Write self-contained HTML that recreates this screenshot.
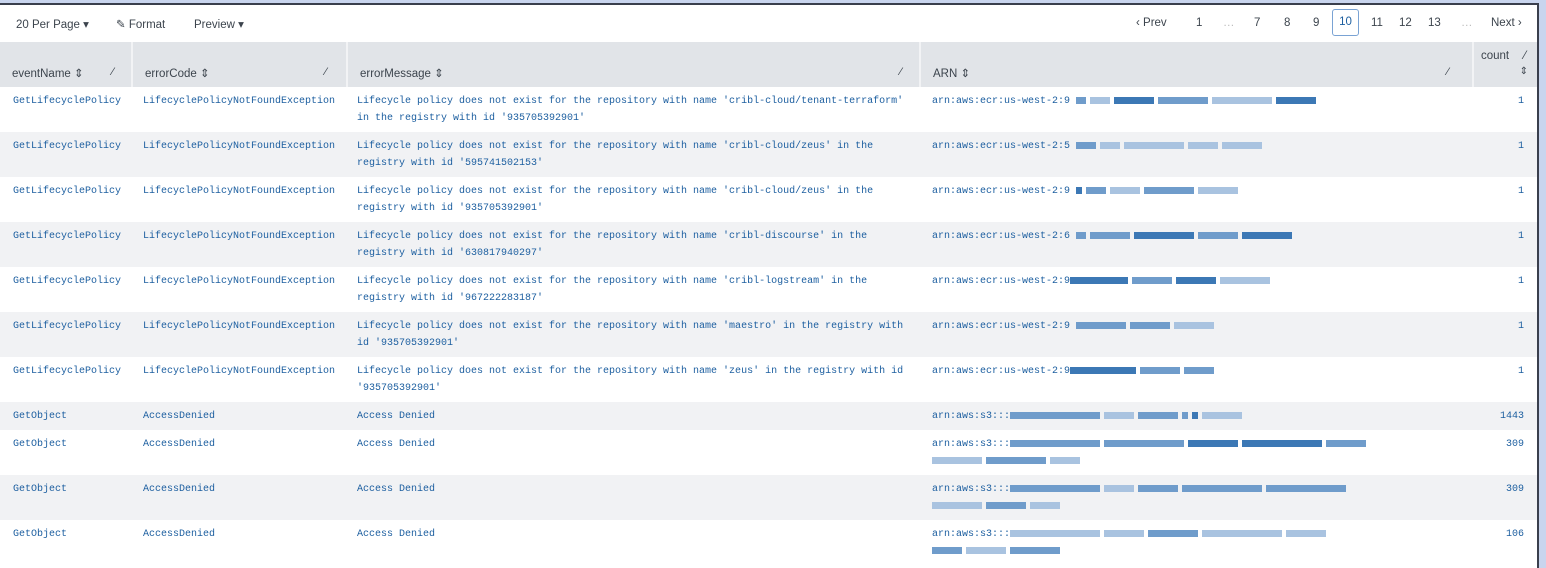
<!DOCTYPE html><html><head><meta charset="utf-8"><style>
*{box-sizing:border-box;margin:0;padding:0}
body{width:1546px;height:568px;background:#c9d5ee;position:relative;overflow:hidden;font-family:"Liberation Sans",sans-serif}
.frame{position:absolute;left:0;top:3px;width:1539px;height:565px;background:#fff;border-top:2px solid #3a3f4d;border-right:2px solid #3a3f4d}
.tb{position:absolute;top:12px;font-size:11.5px;color:#3c444d}
.hdr{position:absolute;left:0;top:37px;width:1537px;height:45px;background:#e1e4e8}
.hc{position:absolute;top:0;height:45px;border-right:2px solid #f2f3f5;font-size:11.5px;color:#3c444d}
.hc span.t{position:absolute;left:12px;top:24px}
.pen{position:absolute;top:24px;font-size:11px;color:#3c444d}
.row{position:absolute;left:0;width:1537px;font-family:"Liberation Mono",monospace;font-size:10px;color:#1d5fa0;line-height:17px}
.g{background:#f1f2f4}
.c{position:absolute;top:6px}
.b{display:inline-block;height:7px;vertical-align:middle;background:#3c78b5;margin-right:4px}
.l{background:#a9c3e0}.m{background:#6f9ccb}
.pg{position:absolute;top:12px;font-size:11.5px;color:#3c444d}
</style></head><body>
<div class="frame">
<div class="tb" style="left:16px">20 Per Page ▾</div>
<div class="tb" style="left:116px">✎ Format</div>
<div class="tb" style="left:194px">Preview ▾</div>
<div class="pg" style="left:1136px">‹ Prev</div>
<div class="pg" style="left:1196px">1</div>
<div class="pg" style="left:1223px;color:#bbb">…</div>
<div class="pg" style="left:1254px">7</div>
<div class="pg" style="left:1284px">8</div>
<div class="pg" style="left:1313px">9</div>
<div style="position:absolute;left:1332px;top:4px;width:27px;height:27px;border:1px solid #7aa3d4;border-radius:3px;font-size:11.5px;color:#1d5fa0;text-align:center;line-height:25px">10</div>
<div class="pg" style="left:1371px">11</div>
<div class="pg" style="left:1399px">12</div>
<div class="pg" style="left:1428px">13</div>
<div class="pg" style="left:1461px;color:#bbb">…</div>
<div class="pg" style="left:1491px">Next ›</div>
<div class="hdr">
<div class="hc" style="left:0;width:133px"><span class="t">eventName ⇕</span><span class="pen" style="left:112px">⁄</span></div>
<div class="hc" style="left:133px;width:215px"><span class="t">errorCode ⇕</span><span class="pen" style="left:192px">⁄</span></div>
<div class="hc" style="left:348px;width:573px"><span class="t">errorMessage ⇕</span><span class="pen" style="left:552px">⁄</span></div>
<div class="hc" style="left:921px;width:553px"><span class="t">ARN ⇕</span><span class="pen" style="left:526px">⁄</span></div>
<div class="hc" style="left:1474px;width:63px;border:none"><span style="position:absolute;left:7px;top:8px">count</span><span style="position:absolute;left:50px;top:8px">⁄</span><span style="position:absolute;right:9px;top:24px;font-size:10px">⇕</span></div>
</div>
</div>
<div class="row" style="top:87px;height:45px"><div class="c" style="left:13px">GetLifecyclePolicy</div><div class="c" style="left:143px">LifecyclePolicyNotFoundException</div><div class="c" style="left:357px">Lifecycle policy does not exist for the repository with name 'cribl-cloud/tenant-terraform'<br>in the registry with id '935705392901'</div><div class="c" style="left:932px">arn:aws:ecr:us-west-2:9 <span class="b m" style="width:10px"></span><span class="b l" style="width:20px"></span><span class="b" style="width:40px"></span><span class="b m" style="width:50px"></span><span class="b l" style="width:60px"></span><span class="b" style="width:40px"></span></div><div class="c" style="right:13px">1</div></div>
<div class="row g" style="top:132px;height:45px"><div class="c" style="left:13px">GetLifecyclePolicy</div><div class="c" style="left:143px">LifecyclePolicyNotFoundException</div><div class="c" style="left:357px">Lifecycle policy does not exist for the repository with name 'cribl-cloud/zeus' in the<br>registry with id '595741502153'</div><div class="c" style="left:932px">arn:aws:ecr:us-west-2:5 <span class="b m" style="width:20px"></span><span class="b l" style="width:20px"></span><span class="b l" style="width:60px"></span><span class="b l" style="width:30px"></span><span class="b l" style="width:40px"></span></div><div class="c" style="right:13px">1</div></div>
<div class="row" style="top:177px;height:45px"><div class="c" style="left:13px">GetLifecyclePolicy</div><div class="c" style="left:143px">LifecyclePolicyNotFoundException</div><div class="c" style="left:357px">Lifecycle policy does not exist for the repository with name 'cribl-cloud/zeus' in the<br>registry with id '935705392901'</div><div class="c" style="left:932px">arn:aws:ecr:us-west-2:9 <span class="b" style="width:6px"></span><span class="b m" style="width:20px"></span><span class="b l" style="width:30px"></span><span class="b m" style="width:50px"></span><span class="b l" style="width:40px"></span></div><div class="c" style="right:13px">1</div></div>
<div class="row g" style="top:222px;height:45px"><div class="c" style="left:13px">GetLifecyclePolicy</div><div class="c" style="left:143px">LifecyclePolicyNotFoundException</div><div class="c" style="left:357px">Lifecycle policy does not exist for the repository with name 'cribl-discourse' in the<br>registry with id '630817940297'</div><div class="c" style="left:932px">arn:aws:ecr:us-west-2:6 <span class="b m" style="width:10px"></span><span class="b m" style="width:40px"></span><span class="b" style="width:60px"></span><span class="b m" style="width:40px"></span><span class="b" style="width:50px"></span></div><div class="c" style="right:13px">1</div></div>
<div class="row" style="top:267px;height:45px"><div class="c" style="left:13px">GetLifecyclePolicy</div><div class="c" style="left:143px">LifecyclePolicyNotFoundException</div><div class="c" style="left:357px">Lifecycle policy does not exist for the repository with name 'cribl-logstream' in the<br>registry with id '967222283187'</div><div class="c" style="left:932px">arn:aws:ecr:us-west-2:9<span class="b" style="width:58px"></span><span class="b m" style="width:40px"></span><span class="b" style="width:40px"></span><span class="b l" style="width:50px"></span></div><div class="c" style="right:13px">1</div></div>
<div class="row g" style="top:312px;height:45px"><div class="c" style="left:13px">GetLifecyclePolicy</div><div class="c" style="left:143px">LifecyclePolicyNotFoundException</div><div class="c" style="left:357px">Lifecycle policy does not exist for the repository with name 'maestro' in the registry with<br>id '935705392901'</div><div class="c" style="left:932px">arn:aws:ecr:us-west-2:9 <span class="b m" style="width:50px"></span><span class="b m" style="width:40px"></span><span class="b l" style="width:40px"></span></div><div class="c" style="right:13px">1</div></div>
<div class="row" style="top:357px;height:45px"><div class="c" style="left:13px">GetLifecyclePolicy</div><div class="c" style="left:143px">LifecyclePolicyNotFoundException</div><div class="c" style="left:357px">Lifecycle policy does not exist for the repository with name 'zeus' in the registry with id<br>'935705392901'</div><div class="c" style="left:932px">arn:aws:ecr:us-west-2:9<span class="b" style="width:66px"></span><span class="b m" style="width:40px"></span><span class="b m" style="width:30px"></span></div><div class="c" style="right:13px">1</div></div>
<div class="row g" style="top:402px;height:28px"><div class="c" style="left:13px">GetObject</div><div class="c" style="left:143px">AccessDenied</div><div class="c" style="left:357px">Access Denied</div><div class="c" style="left:932px">arn:aws:s3:::<span class="b m" style="width:90px"></span><span class="b l" style="width:30px"></span><span class="b m" style="width:40px"></span><span class="b m" style="width:6px"></span><span class="b" style="width:6px"></span><span class="b l" style="width:40px"></span></div><div class="c" style="right:13px">1443</div></div>
<div class="row" style="top:430px;height:45px"><div class="c" style="left:13px">GetObject</div><div class="c" style="left:143px">AccessDenied</div><div class="c" style="left:357px">Access Denied</div><div class="c" style="left:932px">arn:aws:s3:::<span class="b m" style="width:90px"></span><span class="b m" style="width:80px"></span><span class="b" style="width:50px"></span><span class="b" style="width:80px"></span><span class="b m" style="width:40px"></span><br><span class="b l" style="width:50px"></span><span class="b m" style="width:60px"></span><span class="b l" style="width:30px"></span></div><div class="c" style="right:13px">309</div></div>
<div class="row g" style="top:475px;height:45px"><div class="c" style="left:13px">GetObject</div><div class="c" style="left:143px">AccessDenied</div><div class="c" style="left:357px">Access Denied</div><div class="c" style="left:932px">arn:aws:s3:::<span class="b m" style="width:90px"></span><span class="b l" style="width:30px"></span><span class="b m" style="width:40px"></span><span class="b m" style="width:80px"></span><span class="b m" style="width:80px"></span><br><span class="b l" style="width:50px"></span><span class="b m" style="width:40px"></span><span class="b l" style="width:30px"></span></div><div class="c" style="right:13px">309</div></div>
<div class="row" style="top:520px;height:45px"><div class="c" style="left:13px">GetObject</div><div class="c" style="left:143px">AccessDenied</div><div class="c" style="left:357px">Access Denied</div><div class="c" style="left:932px">arn:aws:s3:::<span class="b l" style="width:90px"></span><span class="b l" style="width:40px"></span><span class="b m" style="width:50px"></span><span class="b l" style="width:80px"></span><span class="b l" style="width:40px"></span><br><span class="b m" style="width:30px"></span><span class="b l" style="width:40px"></span><span class="b m" style="width:50px"></span></div><div class="c" style="right:13px">106</div></div>
</body></html>
